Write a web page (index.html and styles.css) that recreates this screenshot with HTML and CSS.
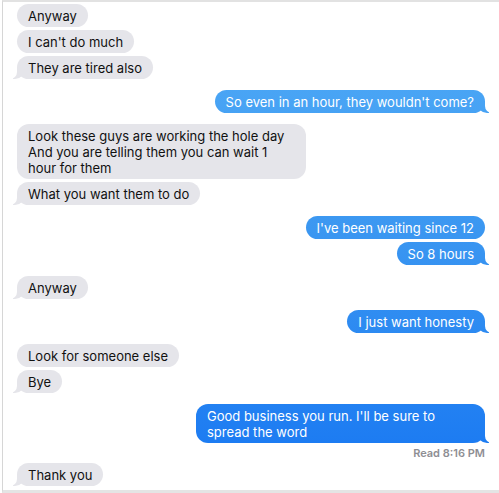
FILE: index.html
```html
<!DOCTYPE html>
<html>
<head>
<meta charset="utf-8">
<link rel="stylesheet" href="styles.css">
</head>
<body>
<div class="chat">
  <div class="group in">
    <div class="bubble">Anyway</div>
    <div class="bubble">I can't do much</div>
    <div class="bubble tail">They are tired also</div>
  </div>
  <div class="group out">
    <div class="bubble tail">So even in an hour, they wouldn't come?</div>
  </div>
  <div class="group in">
    <div class="bubble wide">Look these guys are working the hole day<br>And you are telling them you can wait 1<br>hour for them</div>
    <div class="bubble tail">What you want them to do</div>
  </div>
  <div class="group out">
    <div class="bubble">I've been waiting since 12</div>
    <div class="bubble tail">So 8 hours</div>
  </div>
  <div class="group in">
    <div class="bubble tail">Anyway</div>
  </div>
  <div class="group out">
    <div class="bubble tail">I just want honesty</div>
  </div>
  <div class="group in">
    <div class="bubble">Look for someone else</div>
    <div class="bubble tail">Bye</div>
  </div>
  <div class="group out">
    <div class="bubble tail wide">Good business you run. I'll be sure to<br>spread the word</div>
    <div class="receipt">Read 8:16 PM</div>
  </div>
  <div class="group in last">
    <div class="bubble tail">Thank you</div>
  </div>
</div>
</body>
</html>
```
FILE: styles.css
```css
html, body {
  margin: 0;
  padding: 0;
  background: #ffffff;
}
body {
  width: 499px;
  height: 493px;
  overflow: hidden;
  font-family: "Inter", "Liberation Sans", Arial, sans-serif;
  font-size: 13px;
}
.chat {
  box-sizing: border-box;
  height: 493px;
  margin-left: 2px;
  border-top: 2px solid #e2e2e2;
  border-left: 1px solid #d6d6d6;
  border-bottom: 3px solid #e4e4e4;
  padding: 2px 14px 0 14px;
  display: flex;
  flex-direction: column;
  gap: 11px;
  isolation: isolate;
}
.group {
  display: flex;
  flex-direction: column;
  gap: 3px;
}
.group.in { align-items: flex-start; }
.group.out { align-items: flex-end; }
.bubble {
  position: relative;
  line-height: 16px;
  padding: 4px 11px 3px 11px;
  border-radius: 12px;
  z-index: 0;
  isolation: isolate;
}
.bubble.wide {
  box-sizing: border-box;
  width: 289px;
}
.in .bubble {
  background: #e5e5ea;
  color: #111;
}
.out .bubble {
  color: #fff;
  background: linear-gradient(#52adf7 0px, #3b97f1 230px, #1c7bf2 450px) fixed;
}
.bubble.tail::before {
  content: "";
  position: absolute;
  bottom: 0;
  width: 12px;
  height: 12px;
  z-index: -1;
}
.bubble.tail::after {
  content: "";
  position: absolute;
  bottom: 0;
  width: 7px;
  height: 12px;
  background: #fff;
  z-index: -1;
}
.in .bubble.tail::before {
  left: -4px;
  background: #e5e5ea;
  border-bottom-right-radius: 10px;
}
.in .bubble.tail::after {
  left: -7px;
  border-bottom-right-radius: 7px;
}
.out .bubble.tail::before {
  right: -4px;
  background: linear-gradient(#52adf7 0px, #3b97f1 230px, #1c7bf2 450px) fixed;
  border-bottom-left-radius: 10px;
}
.out .bubble.tail::after {
  right: -7px;
  border-bottom-left-radius: 7px;
}
.receipt {
  margin-top: 1px;
  font-size: 11px;
  font-weight: 600;
  color: #8e8e93;
  line-height: 13px;
}
.group.last { margin-top: -8px; }
```
